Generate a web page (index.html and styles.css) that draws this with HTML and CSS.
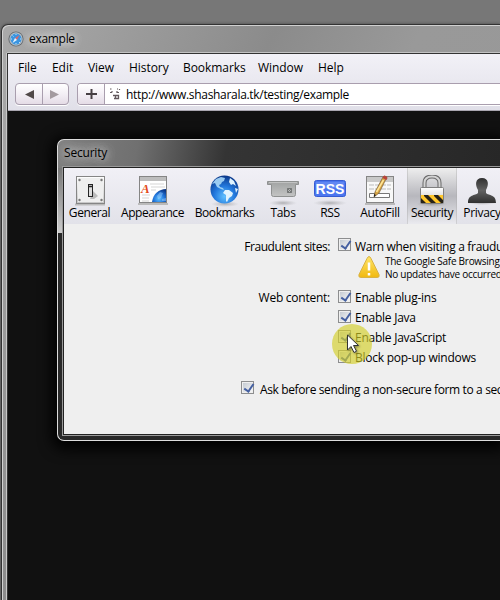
FILE: index.html
```html
<!DOCTYPE html>
<html lang="en">
<head>
<meta charset="utf-8">
<title>example</title>
<link rel="stylesheet" href="styles.css">
</head>
<body>
<svg width="0" height="0" class="defs">
  <defs>
    <linearGradient id="metal" x2="0" y2="1"><stop stop-color="#fff"/><stop offset="1" stop-color="#c6c6c6"/></linearGradient>
    <linearGradient id="dark" x2="0" y2="1"><stop stop-color="#303030"/><stop offset=".5" stop-color="#626262"/><stop offset="1" stop-color="#303030"/></linearGradient>
    <linearGradient id="tray" x2="0" y2="1"><stop stop-color="#a0a2a2"/><stop offset="1" stop-color="#c3c4c4"/></linearGradient>
    <radialGradient id="globe" cx=".5" cy=".75" r=".75"><stop stop-color="#5fc0ff"/><stop offset=".5" stop-color="#2277dc"/><stop offset="1" stop-color="#0b3687"/></radialGradient>
    <linearGradient id="warn" x2="0" y2="1"><stop stop-color="#ffe568"/><stop offset="1" stop-color="#f1b910"/></linearGradient>
    <radialGradient id="shade"><stop stop-color="#777" stop-opacity=".5"/><stop offset="1" stop-color="#999" stop-opacity="0"/></radialGradient>
    <pattern id="hazard" width="10" height="10" patternUnits="userSpaceOnUse"><rect width="10" height="10" fill="#ffc72c"/><path d="M-1 0h5l10 10h-5zM-11 0h5l10 10h-5z" fill="#272218"/></pattern>
  </defs>
</svg>
<div class="window">
  <header class="titlebar">
    <svg class="compass" width="16" height="16" viewBox="0 0 16 16"><circle cx="8" cy="8" r="7.6" fill="#62676c"/><circle cx="8" cy="8" r="6.7" fill="#b4bcc3"/><circle cx="8" cy="8" r="5.5" fill="#3b95e0"/><path d="M8 3v1M8 12v1M3 8h1M12 8h1M4.500 4.500l1 1M11 11l1 1" stroke="#b9e3ff"/><path d="M11.500 4 9 9 7 7z" fill="#d9656a"/><path d="M4.500 12 7 7l2 2z" fill="#e9f5ff"/></svg>
    <span class="title">example</span>
  </header>
  <section class="client">
    <nav class="menu"><span>File</span><span>Edit</span><span>View</span><span>History</span><span>Bookmarks</span><span>Window</span><span>Help</span></nav>
    <div class="navigation">
      <div class="history-buttons">
        <svg width="52" height="20" viewBox="0 0 52 20"><path d="M26.500 0v20" stroke="#a99eae"/><path d="M9 10.500 18 6v9z" fill="#514949"/><path d="M43 10.500 34 6v9z" fill="#a39a9f"/></svg>
      </div>
      <div class="address">
        <svg class="plus" width="27" height="20" viewBox="0 0 27 20"><path d="M8 10h11M13.500 5v10" stroke="#463f43" stroke-width="2"/><path d="M26.500 0v20" stroke="#a99eae"/></svg>
        <svg width="12" height="14" viewBox="0 0 12 14"><path d="M1 2h1.500M1 5.500h2M3 4v1.500M8 2h1M10.500 2v1M10 5.500H8V4" stroke="#62585c" stroke-width="1.200" fill="none"/><path d="M4 8.500h5.500v3H6.500V8.500M6.500 11.500H5" stroke="#62585c" stroke-width="1.300" fill="none"/></svg>
        <span class="url">http://www.shasharala.tk/testing/example</span>
      </div>
    </div>
    <main class="page"></main>
  </section>
</div>

<section class="dialog">
  <header class="dialog-title"><span>Security</span></header>
  <div class="dialog-body">
    <nav class="tabs">
      <div class="tab"><svg viewBox="0 0 36 32"><path d="M3 29.500h30" stroke="#bbb" stroke-width="2"/><rect x="4.500" y="1.500" width="28" height="27" fill="url(#metal)" stroke="#858585"/><rect x="6" y="3" width="25" height="24" fill="#efefef"/><g fill="#777"><circle cx="7.500" cy="5" r="1.200"/><circle cx="29.500" cy="5" r="1.200"/><circle cx="7.500" cy="25" r="1.200"/><circle cx="29.500" cy="25" r="1.200"/></g><path d="M21 16l5 5-4 3h-4z" fill="#bbb"/><rect x="16.500" y="9.500" width="4" height="12" fill="#ddd" stroke="#252525"/><path d="M17 11.500h3" stroke="#222" stroke-width="1.500"/></svg><span>General</span></div>
      <div class="tab"><svg viewBox="0 0 36 32"><path d="M3 29h30" stroke="#bbb" stroke-width="2"/><rect x="4.500" y="1.500" width="27" height="26" fill="#fff" stroke="#858585"/><path d="M5 2h26v4H5z" fill="#bdbdbd"/><path d="M15 9h14M16 12h14M16 15h5M7 20h8M7 23h7M7 26h7" stroke="#d5d5d5"/><text x="6" y="18" class="letter">A</text><path d="M17 27c1-8 7-13 14-13v13z" fill="url(#globe)"/><path d="M22 21l3-4 3 1-2 5-3 1zM27 24l4-1v3h-4z" fill="#b7ddff" opacity=".4"/></svg><span>Appearance</span></div>
      <div class="tab"><svg viewBox="0 0 36 32"><ellipse cx="18" cy="29" rx="14" ry="3" fill="url(#shade)"/><circle cx="17.500" cy="14.500" r="14" fill="url(#globe)"/><path d="M5 9 9 4l5-2 4 1-1 3-2 1-1 2-2 1 1 2 3 1 1 2-3-1-4-2-2-4z" fill="#a9d8f8" opacity=".9"/><path d="m18 15 4 0 4 3-1 3-3 2-2 4-1-1 0-6-3-2zM23 3l4 3 2 5-3-2-2 1-2-3zM28 13l3 1-2 4z" fill="#dff3ff"/></svg><span>Bookmarks</span></div>
      <div class="tab"><svg viewBox="0 0 36 32"><ellipse cx="18" cy="28" rx="14" ry="3" fill="url(#shade)"/><path d="M2.500 6.500h31v3h-3v10q0 2-2 2h-20q-2 0-2-2v-10h-4z" fill="url(#tray)" stroke="#8f9191"/><path d="M4 7.500h28" stroke="#c1c2c2"/><path d="M22.500 13.500h4v4h-4zl4 4m0-4-4 4" fill="none" stroke="#747777"/></svg><span>Tabs</span></div>
      <div class="tab"><svg viewBox="0 0 36 32"><ellipse cx="18" cy="28" rx="17" ry="3" fill="url(#shade)"/><rect x="2.500" y="5.500" width="31" height="16" rx="2" fill="#4b76ef" stroke="#365cd2"/><path d="M4 7h28v6H4z" fill="#6288f2"/><text x="18" y="18.500" class="rss">RSS</text></svg><span>RSS</span></div>
      <div class="tab"><svg viewBox="0 0 36 32"><path d="M3 29h30" stroke="#bbb" stroke-width="2"/><rect x="4.500" y="1.500" width="27" height="26" fill="#f8f8f8" stroke="#858585"/><path d="M5 2h26v5H5z" fill="#c9c9c9"/><path d="M7 10h22M7 14h22" stroke="#bbb" stroke-dasharray="5 1"/><path d="M7.500 18.500h20v4h-20z" fill="#fff" stroke="#777"/><path d="m12 22 1-5L21 2q1-2 4 0l-8 16z" fill="#d9a442" stroke="#765d38" stroke-width=".7"/><path d="m14.500 17 7-12" stroke="#ffe698" stroke-width="1.500"/><path d="m20.500 3 1-2q2-1 4 2l-1 2z" fill="#b9433e"/><path d="M12 22v-3l2 1z" fill="#222"/></svg><span>AutoFill</span></div>
      <div class="tab selected"><svg viewBox="0 0 36 32"><ellipse cx="18" cy="29" rx="16" ry="3" fill="url(#shade)"/><path d="M10.500 13V8q0-6.500 7.500-6.500T25.500 8v5" fill="none" stroke="#696969" stroke-width="4"/><path d="M10.500 13V8q0-6.500 7.500-6.500T25.500 8v5" fill="none" stroke="#d4d4d4" stroke-width="2"/><rect x="6.500" y="12.500" width="23" height="16" rx="1" fill="url(#metal)" stroke="#7f7f7f"/><rect x="7" y="20" width="22" height="8" fill="url(#hazard)"/></svg><span>Security</span></div>
      <div class="tab"><svg viewBox="0 0 36 32"><ellipse cx="18" cy="28" rx="15" ry="2" fill="url(#shade)"/><path d="M18 3c7 0 7 7 4 12v3c3 3 10 1 10 10H4c0-9 7-7 10-10v-3C11 10 11 3 18 3z" fill="url(#dark)"/></svg><span>Privacy</span></div>
    </nav>
    <div class="settings">
      <div class="row fraud"><span class="label l-fraud">Fraudulent sites:</span><i class="check"></i><span class="warn-label">Warn when visiting a fraudu</span></div>
      <div class="notice"><svg width="24" height="24" viewBox="0 0 24 24"><path d="M12 1.500q1 0 2 2l8 16q1 3-2 3H4q-3 0-2-3l8-16q1-2 2-2z" fill="url(#warn)" stroke="#d8b245"/><path d="M12 7.500v8M12 18v2.500" stroke="#fff" stroke-width="2.500"/></svg><div class="notice-copy"><p>The Google Safe Browsing</p><p>No updates have occurred</p></div></div>
      <div class="row web"><span class="label l-web">Web content:</span><i class="check"></i><span>Enable plug-ins</span></div>
      <div class="row web"><span class="label"></span><i class="check"></i><span>Enable Java</span></div>
      <div class="row web"><span class="label"></span><i class="check"></i><span>Enable JavaScript</span></div>
      <div class="row web"><span class="label"></span><i class="check"></i><span>Block pop-up windows</span></div>
      <div class="row ask"><i class="check"></i><span class="ask-label">Ask before sending a non-secure form to a sec</span></div>
    </div>
  </div>
</section>
<div class="click-highlight"></div>
<svg class="cursor" width="14" height="20" viewBox="0 0 14 20"><path d="M1.500 1v15l3.500-3.500 3 6 2.500-1.300-3-5.700h5z" fill="#fff" stroke="#333" stroke-width="1"/></svg>
</body>
</html>
```
FILE: styles.css
```css
* { box-sizing: border-box; }
body { margin: 0; width: 500px; height: 600px; overflow: hidden; padding: 24px 0 0 1px; background: #777; color: #000; font: 12px/18px "Open Sans", "Noto Sans", sans-serif; white-space: nowrap; }
svg { display: block; flex: none; }
.defs { position: absolute; }
.window { width: 499px; height: 576px; overflow: hidden; padding: 0 0 0 5px; border: solid #333; border-width: 1px 0 0 1px; border-radius: 7px 0 0 0; background: linear-gradient(115deg, #aaa 0, #929292 28%, #8b8b8b 36%, #999 55%, #979797 100%); box-shadow: inset 1px 1px #d0d0d0, 0 0 3px #444; }
.titlebar { height: 28px; padding: 5px 0 0 1px; display: flex; align-items: flex-start; gap: 5px; border-bottom: 1px solid #c2c2c2; }
.compass { margin-top: 1px; }
.title { text-shadow: 0 0 8px #fff, 0 0 8px #ddd; letter-spacing: -.3px; }
.client { border: solid #333; border-width: 1px 0 0 1px; box-shadow: -1px 0 #c8c8c8; background: linear-gradient(#f2f1f7, #e0dfe8 57px); }
.menu { display: grid; grid-template-columns: 34px 36px 41px 54px 75px 60px 50px; height: 29px; padding: 5px 0 0 10px; letter-spacing: -.05px; }
.navigation { height: 28px; display: flex; gap: 8px; padding: 0 0 0 7px; border-bottom: 1px solid #aaa6b0; }
.history-buttons, .address { height: 22px; border: 1px solid #a99eae; border-radius: 4px; background: linear-gradient(#fff, #f3eff5 50%, #e5dce6); box-shadow: 0 1px #fff; }
.history-buttons { width: 54px; flex: none; }
.address { flex: 1; display: flex; align-items: center; background: #fff; overflow: hidden; border-right: 0; border-radius: 4px 0 0 4px; }
.plus { background: linear-gradient(#fff, #f3eff5 50%, #e5dce6); }
.address svg + svg { margin-left: 4px; }
.url { margin-left: 5px; padding-top: 2px; letter-spacing: -.31px; }
.page { height: 489px; background: #111; }
.dialog { position: absolute; left: 57px; top: 139px; width: 443px; height: 302px; border: 1px solid #ddd; border-width: 1px 0 1px 1px; border-radius: 7px 0 0 7px; padding: 0 0 0 5px; background: linear-gradient(100deg, #808080 0, #707070 18%, #343434 38%, #272727 100%) 0 0/100% 28px no-repeat, #292929; box-shadow: 0 3px 14px 5px #000; }
.dialog::before { content: ""; position: absolute; left: 0; top: 28px; width: 5px; height: 65px; background: linear-gradient(#777, #ccc); }
.dialog-title { height: 27px; padding: 4px 0 0 1px; letter-spacing: -.2px; }
.dialog-title span { text-shadow: 0 0 8px #ccc, 0 0 10px #ccc, 0 0 12px #aaa; }
.dialog-body { height: 268px; border: solid #222; border-width: 1px 0 1px 1px; box-shadow: 0 0 0 1px #999; background: #efefef; overflow: hidden; position: relative; }
.tabs { display: grid; grid-template-columns: 51px 75px 69px 48px 46px 54px 50px 50px; height: 56px; background: linear-gradient(#f1f0f6, #e2e2e9); }
.tab { display: flex; flex-direction: column; align-items: center; padding-top: 7px; }
.tab svg { width: 36px; height: 32px; }
.tab span { line-height: 15px; margin-top: -2px; letter-spacing: -.4px; }
.tab:nth-child(n+4) span { letter-spacing: -.3px; }
.selected { background: linear-gradient(#eee, #b7b7bd 50%, #eaeaef); border: solid #aaa6; border-width: 0 1px; }
.letter { font: italic bold 13px "Liberation Serif", serif; fill: #e34a20; }
.rss { font: bold 14px "Liberation Sans", sans-serif; fill: #fff; text-anchor: middle; letter-spacing: 0; }
.settings { padding-top: 14px; }
.row { display: flex; height: 20px; line-height: 20px; letter-spacing: -.25px; }
.row > span { margin-top: -1px; }
.web > span { margin-top: -2px; }
.fraud { height: 17px; }
.label { flex: none; width: 266px; text-align: right; margin-right: 8px; }
.l-fraud { letter-spacing: -.42px; }
.warn-label { letter-spacing: -.31px; }
.check { flex: none; width: 13px; height: 13px; border: 1px solid #8d8e8f; margin: 0 4px 0 0; background: linear-gradient(135deg, #c5cbd3, #f6f6f6) content-box; padding: 1px; position: relative; }
.check::after { content: ""; position: absolute; left: 4px; top: 0; width: 4px; height: 8px; border: solid #4560a1; border-width: 0 2px 2px 0; transform: rotate(35deg); }
.notice { height: 35px; margin-left: 293px; display: flex; }
.notice-copy { font-size: 10px; line-height: 13px; margin-left: 4px; letter-spacing: -.27px; }
.notice p { margin: 0; }
.ask { padding-left: 177px; margin-top: 11px; }
.ask > span { margin-top: -1px; }
.ask-label { margin-left: 2px; letter-spacing: -.37px; }
.click-highlight { position: absolute; left: 332px; top: 324px; width: 40px; height: 40px; border-radius: 50%; background: #d3cf29a8; }
.cursor { position: absolute; left: 346px; top: 334px; filter: drop-shadow(1px 1px 1px #0006); }
```
